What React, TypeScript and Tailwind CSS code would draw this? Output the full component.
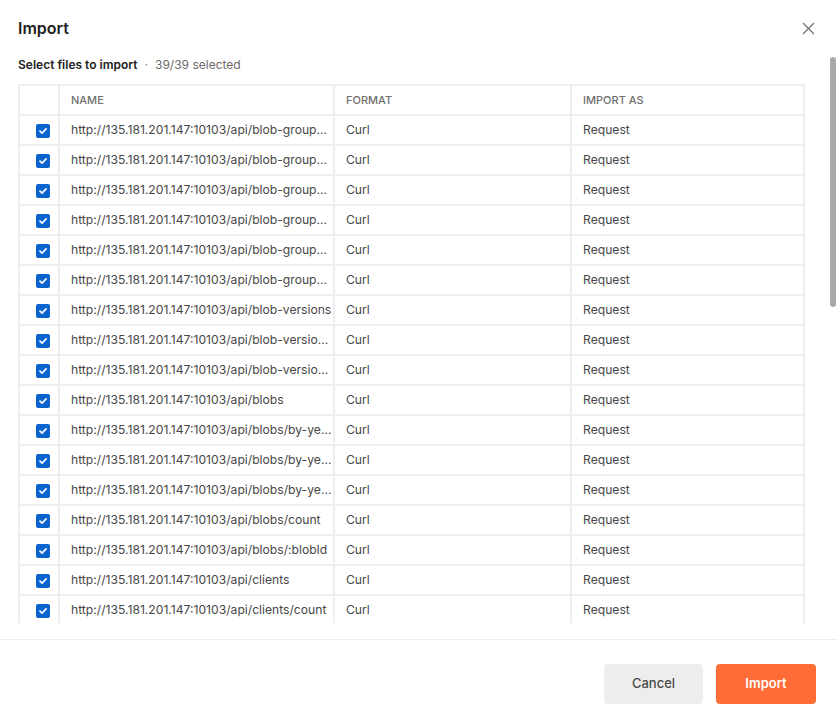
import React from "react";

const BASE = "http://135.181.201.147:10103/api/";

const paths = [
  "blob-groups/:blobGroupId/blobs",
  "blob-groups/:blobGroupId",
  "blob-groups/count",
  "blob-groups/by-name/:name",
  "blob-groups/:blobGroupId/versions",
  "blob-groups/search?query=",
  "blob-versions",
  "blob-versions/:blobVersionId",
  "blob-versions/count",
  "blobs",
  "blobs/by-year/:year",
  "blobs/by-year/:year/count",
  "blobs/by-year/:year/month/:month",
  "blobs/count",
  "blobs/:blobId",
  "clients",
  "clients/count",
  "clients/:clientId",
  "clients/:clientId/blobs",
  "clients/:clientId/tokens",
  "clients/by-name/:name",
  "devices",
  "devices/count",
  "devices/:deviceId",
  "devices/:deviceId/status",
  "events",
  "events/count",
  "events/:eventId",
  "groups",
  "groups/count",
  "groups/:groupId",
  "groups/:groupId/members",
  "health",
  "logs",
  "logs/count",
  "users",
  "users/count",
  "users/:userId",
  "version",
];

function Checkbox() {
  return (
    <span className="inline-flex h-[14px] w-[14px] items-center justify-center rounded-[2px] bg-[#0b63ce]">
      <svg width="10" height="10" viewBox="0 0 10 10" fill="none">
        <path d="M2 5.2 4.1 7.2 8.1 2.9" stroke="#fff" strokeWidth="1.7" strokeLinecap="round" strokeLinejoin="round" />
      </svg>
    </span>
  );
}

export default function App() {
  return (
    <div
      className="flex h-[722px] w-[837px] flex-col bg-white text-[#3b3b3b]"
      style={{ fontFamily: "Inter, 'Noto Sans', sans-serif" }}
    >
      <div className="flex items-center justify-between pl-[18px] pr-[19px] pt-[16px]">
        <h1 className="text-[16px] font-semibold leading-[24px] text-[#212121]">Import</h1>
        <button className="flex h-[20px] w-[20px] items-center justify-center text-[#6b6b6b]">
          <svg width="13" height="13" viewBox="0 0 13 13" fill="none">
            <path d="M1 1 12 12M12 1 1 12" stroke="currentColor" strokeWidth="1.1" />
          </svg>
        </button>
      </div>

      <div className="relative mt-[8px] min-h-0 flex-1">
        <div className="h-full overflow-y-auto pl-[18px] pr-[34px]">
          <div className="pt-[8px] text-[12px] leading-[18px]">
            <span className="font-semibold text-[#212121]">Select files to import</span>
            <span className="mx-[7px] text-[#8a8a8a]">·</span>
            <span className="text-[#6b6b6b]">39/39 selected</span>
          </div>

          <table className="mb-[40px] mt-[10px] w-[785px] table-fixed border-collapse text-left text-[12.15px]">
            <colgroup>
              <col className="w-[40px]" />
              <col className="w-[275px]" />
              <col className="w-[237px]" />
              <col className="w-[233px]" />
            </colgroup>
            <thead>
              <tr className="h-[30px] text-[11px] font-medium uppercase text-[#707070]">
                <th className="border-2 border-[#eeeeee] p-0" />
                <th className="border-2 border-[#eeeeee] px-[11px] font-medium">Name</th>
                <th className="border-2 border-[#eeeeee] px-[11px] font-medium">Format</th>
                <th className="border-2 border-[#eeeeee] px-[11px] font-medium">Import as</th>
              </tr>
            </thead>
            <tbody>
              {paths.map((p) => (
                <tr key={p} className="h-[30px] text-[#474747]">
                  <td className="border-2 border-[#eeeeee] pl-[16px] pt-[3px] leading-none">
                    <Checkbox />
                  </td>
                  <td className="truncate border-2 border-[#eeeeee] pl-[11px] pr-0">{BASE + p}</td>
                  <td className="border-2 border-[#eeeeee] px-[11px]">Curl</td>
                  <td className="border-2 border-[#eeeeee] px-[11px]">Request</td>
                </tr>
              ))}
            </tbody>
          </table>
        </div>
        {/* scrollbar thumb (browser scrollbars are hidden in the capture) */}
        <div className="pointer-events-none absolute right-[1px] top-[9px] h-[250px] w-[6px] rounded-full bg-[#a9a9a9]" />
      </div>

      <div className="mt-[16px] flex justify-end gap-[13px] border-t border-[#ededed] pb-[18px] pr-[21px] pt-[24px]">
        <button className="h-[40px] w-[99px] rounded-[4px] bg-[#ededed] text-[13px] font-medium text-[#4a4a4a]">
          Cancel
        </button>
        <button className="h-[40px] w-[100px] rounded-[4px] bg-[#ff6c37] text-[13px] font-semibold text-white">
          Import
        </button>
      </div>
    </div>
  );
}
